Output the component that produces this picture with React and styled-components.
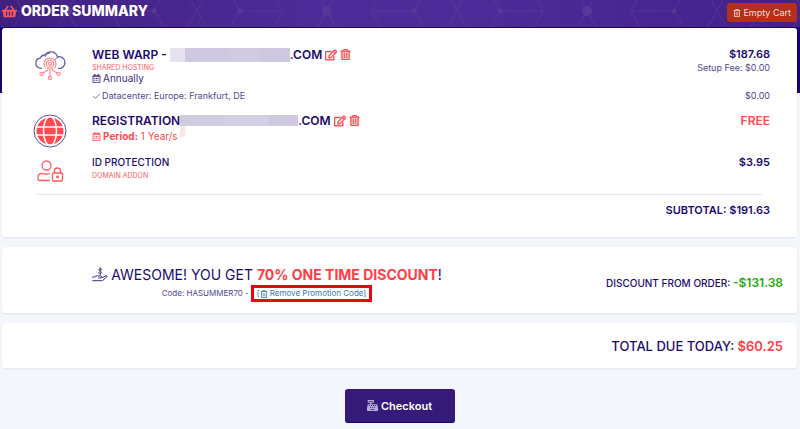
import React from 'react';
import styled, { createGlobalStyle } from 'styled-components'
import { FaShoppingBasket, FaRegEdit, FaRegTrashAlt, FaRegCalendarAlt, FaCashRegister } from 'react-icons/fa'
import { LuCheck } from 'react-icons/lu'

const GlobalStyle = createGlobalStyle`
* { box-sizing: border-box; }
body {
margin: 0;
background: #f3f6fa;
color: #1d0a70;
font-family: Inter, "Open Sans", sans-serif;
font-size: 10px;
}
h1, h2, h3, p { margin: 0; padding: 0; }
button { font-family: inherit; cursor: pointer; }
svg { flex-shrink: 0; }
`

const Page = styled.div`
background: linear-gradient(#190673 93px, #f3f6fa 93px);
`

const Header = styled.header`
position: relative;
display: flex;
justify-content: space-between;
align-items: flex-start;
height: 27px;
margin-bottom: 1px;
padding: 3px 3px 0 2px;
background: linear-gradient(90deg, #3f2181, #4d2c9a 40%, #4d2c9a 60%, #42218a);
`

const Mesh = styled.svg`
position: absolute;
top: 0;
left: 0;
width: 100%;
height: 100%;
`

const Title = styled.h1`
position: relative;
display: flex;
align-items: center;
gap: 4px;
color: white;
font-size: 14px;
font-weight: 800;
line-height: 16px;
svg { color: #f9545c; }
`

const EmptyButton = styled.button`
position: relative;
display: flex;
align-items: center;
gap: 2px;
height: 19px;
padding: 0 6px;
border: none;
border-radius: 3px;
background: #b5301a;
color: #f6dcd8;
font-size: 9px;
`

const Main = styled.main`
display: flex;
flex-direction: column;
gap: 10px;
padding: 0 3px 6px 2px;
`

const Card = styled.section`
border-radius: 3px;
background: white;
box-shadow: 0 1px 2px rgba(30, 30, 60, 0.08);
`

const Items = styled(Card)`
display: flex;
flex-direction: column;
gap: 6px;
padding: 18px 27px 18px 18px;
`

const Item = styled.article`
display: grid;
grid-template-columns: 60px 1fr auto;
column-gap: 12px;
`

const ItemIcon = styled.div`
display: flex;
justify-content: center;
padding-top: 2px;
`

const ItemTitle = styled.h2`
display: flex;
align-items: center;
font-size: ${props => props.light ? "10px" : "12px"};
font-weight: ${props => props.light ? 500 : 600};
line-height: 17px;
white-space: pre;
`

const Category = styled.p`
color: #ff5a5f;
font-size: 7px;
line-height: 9px;
`

const Line = styled.p`
display: flex;
align-items: center;
gap: 2px;
color: ${props => props.accent ? "#ff4a50" : "#3d2c84"};
font-size: 10px;
line-height: ${props => props.accent ? "14px" : "12px"};
`

const Detail = styled.p`
display: flex;
align-items: center;
gap: 1px;
padding: 6px 0 4px;
color: #54478f;
font-size: 9px;
line-height: 12px;
`

const Prices = styled.div`
display: flex;
flex-direction: column;
text-align: right;
`

const Price = styled.strong`
color: ${props => props.free ? "#ff4a50" : "#1d0a70"};
font-size: ${props => props.free ? "12px" : "11px"};
font-weight: 600;
line-height: 17px;
`

const Fee = styled.span`
color: #54478f;
font-size: 9px;
line-height: 9px;
`

const DetailPrice = styled.span`
margin-top: auto;
padding-bottom: 4px;
color: #54478f;
font-size: 9px;
line-height: 12px;
`

const IconButton = styled.button`
display: flex;
margin-left: 3px;
padding: 0;
border: none;
background: none;
color: #ff4a50;
svg { stroke: currentColor; stroke-width: 20; }
`

const Mask = styled.span`
position: relative;
display: flex;
width: ${props => props.tall ? "120px" : "118px"};
height: ${props => props.tall ? "14px" : "11px"};
background: #d2cce3;
`

const MaskTail = styled.span`
position: absolute;
top: 100%;
left: 0;
width: 5px;
height: 11px;
background: #ffe4e5;
`

const Block = styled.span`
flex: ${props => props.size};
background: ${props => props.shade};
`

const RuleBox = styled.div`
display: flex;
margin-top: -2px;
padding: 0 8px 0 17px;
`

const Rule = styled.hr`
width: 100%;
height: 1px;
margin: 0;
border: none;
background: #e6e6ea;
`

const Subtotal = styled.p`
padding-top: 1px;
font-size: 11px;
font-weight: 600;
line-height: 17px;
text-align: right;
`

const Promo = styled(Card)`
display: grid;
grid-template-columns: 2fr 1fr;
align-items: center;
`

const PromoText = styled.div`
display: flex;
flex-direction: column;
align-items: center;
padding: 18px 0 11px;
`

const PromoTitle = styled.h3`
display: flex;
align-items: center;
gap: 3px;
font-size: 14px;
font-weight: 400;
line-height: 20px;
strong { color: #ff3d44; font-weight: 700; }
`

const PromoCode = styled.div`
display: flex;
align-items: center;
color: #54478f;
font-size: 8px;
line-height: 11px;
`

const RemoveButton = styled.button`
display: flex;
align-items: center;
height: 17px;
margin-left: 2px;
padding: 0 3px;
border: 3px solid #f5000c;
background: white;
color: #3d77b3;
font-size: 8px;
line-height: 11px;
svg { margin-right: 2px; }
`

const PromoAmount = styled.p`
padding: 6px 14px 0 0;
font-size: 10px;
font-weight: 500;
line-height: 20px;
text-align: right;
white-space: nowrap;
strong { color: #20ad0c; font-size: 12px; font-weight: 600; }
`

const Total = styled(Card)`
padding: 13px 14px 12px;
font-size: 13px;
font-weight: 500;
line-height: 20px;
text-align: right;
strong { color: #ff3d44; font-weight: 600; }
`

const CheckoutButton = styled.button`
display: flex;
justify-content: center;
align-items: center;
gap: 3px;
align-self: center;
width: 110px;
height: 34px;
margin-top: 11px;
border: none;
border-bottom: 1px solid #190673;
border-radius: 3px;
background: #351a7a;
color: white;
font-size: 11px;
font-weight: 600;
svg { color: #b8aed6; }
`

const HeaderMesh = () => (
  <Mesh aria-hidden="true">
    <defs>
      <pattern id="mesh" x="-63" y="0" width="260" height="28" patternUnits="userSpaceOnUse">
        <g fill="none" stroke="#60409f" strokeOpacity="0.5">
          <path d="M43 11H86M174 11H217" />
          <path d="M37 0L43 11L33 28M-6 0L10 28M6 0L-10 28M254 0L270 28M266 0L250 28" />
          <path d="M80 0L86 11L76 28M180 0L174 11L184 28M223 0L217 11L227 28" />
          <path d="M124 0L130 11L120 28M136 0L130 11L140 28" />
        </g>
        <g fill="#583897">
          <circle cx="43" cy="11" r="2.5" />
          <circle cx="130" cy="11" r="5" />
          <circle cx="217" cy="11" r="2.5" />
        </g>
      </pattern>
    </defs>
    <rect width="100%" height="100%" fill="url(#mesh)" />
  </Mesh>
)

const CloudIcon = () => (
  <svg width="34" height="34" viewBox="0 0 34 34" fill="none" strokeLinecap="round">
    <path d="M8.5 20.3H7.5A5.2 5.2 0 0 1 7.3 10A5 5 0 0 1 12 7A7 7 0 0 1 24.5 8.8A5.8 5.8 0 0 1 27.5 20.3H25.5" stroke="#6a60a3" strokeWidth="1.3" />
    <path d="M12 8.5Q13.5 5 17 5M22 11.5Q23 9.5 25 9.5" stroke="#6a60a3" />
    <g stroke="#ff8286" strokeWidth="1.1">
      <path d="M12.5 20A6 6 0 1 1 21.5 20M14 18A3.7 3.7 0 1 1 20 18" />
      <circle cx="17" cy="15.5" r="1.5" />
      <path d="M17 17V28M15 18.5V22L10 25M19 18.5V22L24 25" />
      <circle cx="8.5" cy="25.8" r="1.6" />
      <circle cx="25.5" cy="25.8" r="1.6" />
      <circle cx="17" cy="30" r="1.6" />
    </g>
  </svg>
)

const GlobeIcon = () => (
  <svg width="34" height="34" viewBox="0 0 34 34">
    <circle cx="17" cy="17" r="16" fill="white" stroke="#5a4f9c" strokeWidth="1" />
    <circle cx="17" cy="17" r="13.5" fill="#ff4a50" />
    <g fill="none" stroke="white" strokeWidth="1.5">
      <ellipse cx="17" cy="17" rx="6.5" ry="14.5" />
      <path d="M3 13H31M3 21H31" />
    </g>
  </svg>
)

const UserLockIcon = () => (
  <svg width="34" height="34" viewBox="0 0 34 34" fill="none" stroke="#ff5a5f" strokeWidth="1.3">
    <circle cx="13.5" cy="9.5" r="4.5" />
    <path d="M17 24.5H6.5Q5 24.5 5 23V21.5Q5 17.5 9 17.5Q13.5 19 17 17.5" />
    <rect x="19.5" y="17" width="10" height="8" rx="1" />
    <path d="M21.5 17V14.5Q21.5 12 24.5 12Q27.5 12 27.5 14.5V17" />
    <circle cx="24.5" cy="21" r="0.8" fill="#ff5a5f" />
  </svg>
)

const HandIcon = () => (
  <svg width="16" height="16" viewBox="0 0 16 16" fill="none" stroke="#3d2c84" strokeLinecap="round" strokeLinejoin="round">
    <path d="M10 2.5Q8.5 1.3 7.2 2Q6.2 3 7.5 3.8L9 4.4Q10.2 5.5 9 6.3Q7.6 6.9 6.5 5.8M8.2 0.5V7.7" strokeWidth="0.9" />
    <path d="M0.6 10H2.5Q4 8.7 5.5 8.9H9Q10.5 9.7 9 10.9H6.5M10 10.7L13.5 9Q15.6 8.5 14.8 10L11 13.2Q10.3 13.7 9.5 13.7H0.6" />
  </svg>
)

const EditTools = () => (
  <>
    <IconButton aria-label="Edit"><FaRegEdit size={12} /></IconButton>
    <IconButton aria-label="Remove"><FaRegTrashAlt size={11} /></IconButton>
  </>
)

const App = () => (
  <>
    <GlobalStyle />
    <Page>
      <Header>
        <HeaderMesh />
        <Title><FaShoppingBasket size={15} />ORDER SUMMARY</Title>
        <EmptyButton><FaRegTrashAlt size={8} />Empty Cart</EmptyButton>
      </Header>
      <Main>
        <Items>
          <Item>
            <ItemIcon><CloudIcon /></ItemIcon>
            <div>
              <ItemTitle>
                {"WEB WARP - "}
                <Mask tall><Block size={1} shade="#e6e3ef" /><Block size={3} shade="#cec8e0" /><Block size={2} shade="#d1cbe2" /><Block size={2} shade="#cdc7df" /></Mask>
                .COM
                <EditTools />
              </ItemTitle>
              <Category>SHARED HOSTING</Category>
              <Line><FaRegCalendarAlt size={9} />Annually</Line>
              <Detail><LuCheck size={9} />Datacenter: Europe: Frankfurt, DE</Detail>
            </div>
            <Prices>
              <Price>$187.68</Price>
              <Fee>Setup Fee: $0.00</Fee>
              <DetailPrice>$0.00</DetailPrice>
            </Prices>
          </Item>
          <Item>
            <ItemIcon><GlobeIcon /></ItemIcon>
            <div>
              <ItemTitle>
                REGISTRATION
                <Mask><Block size={3} shade="#d1cbe2" /><Block size={3} shade="#d4cfe4" /><Block size={2} shade="#cec8e0" /><MaskTail /></Mask>
                .COM
                <EditTools />
              </ItemTitle>
              <Line accent><FaRegCalendarAlt size={9} /><span><b>Period:</b> 1 Year/s</span></Line>
            </div>
            <Prices><Price free>FREE</Price></Prices>
          </Item>
          <Item>
            <ItemIcon><UserLockIcon /></ItemIcon>
            <div>
              <ItemTitle light>ID PROTECTION</ItemTitle>
              <Category>DOMAIN ADDON</Category>
            </div>
            <Prices><Price>$3.95</Price></Prices>
          </Item>
          <RuleBox><Rule /></RuleBox>
          <Subtotal>SUBTOTAL: $191.63</Subtotal>
        </Items>
        <Promo>
          <PromoText>
            <PromoTitle>
              <HandIcon />
              <span>AWESOME! YOU GET <strong>70% ONE TIME DISCOUNT</strong>!</span>
            </PromoTitle>
            <PromoCode>
              Code: HASUMMER70 -
              <RemoveButton>[<FaRegTrashAlt size={8} />Remove Promotion Code]</RemoveButton>
            </PromoCode>
          </PromoText>
          <PromoAmount>DISCOUNT FROM ORDER: <strong>-$131.38</strong></PromoAmount>
        </Promo>
        <Total>TOTAL DUE TODAY: <strong>$60.25</strong></Total>
        <CheckoutButton><FaCashRegister size={11} />Checkout</CheckoutButton>
      </Main>
    </Page>
  </>
)

export default App;
